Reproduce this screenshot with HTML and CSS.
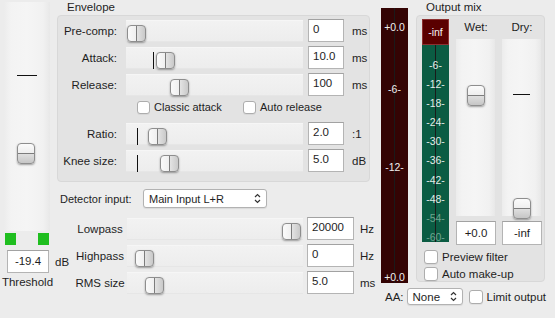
FILE: index.html
```html
<!DOCTYPE html>
<html lang="en">
<head>
  <meta charset="UTF-8" />
  <title>Compressor</title>
  <link rel="stylesheet" href="styles.css">
</head>
<body>

<div class="plugin">

  <!-- Threshold column -->
  <div class="threshold">
    <div class="vtrack thr-track">
      <span class="vmark" style="top: 73px"></span>
      <span class="vthumb" style="top: 141px"></span>
    </div>
    <div class="leds"><span class="led"></span><span class="led"></span></div>
    <div class="thr-field">
      <div class="field center thr-box">-19.4</div>
      <span class="unit">dB</span>
    </div>
    <div class="thr-label">Threshold</div>
  </div>

  <!-- Envelope + detector -->
  <div class="main">
    <div class="group-title">Envelope</div>
    <div class="group envelope">
      <div class="row">
        <span class="row-label">Pre-comp:</span>
        <div class="htrack">
          <span class="hmark" style="left: 12px"></span>
          <span class="hthumb" style="left: 1px"></span>
        </div>
        <div class="field">0</div>
        <span class="unit">ms</span>
      </div>
      <div class="row">
        <span class="row-label">Attack:</span>
        <div class="htrack">
          <span class="hmark" style="left: 27px"></span>
          <span class="hthumb" style="left: 30px"></span>
        </div>
        <div class="field">10.0</div>
        <span class="unit">ms</span>
      </div>
      <div class="row">
        <span class="row-label">Release:</span>
        <div class="htrack">
          <span class="hmark" style="left: 53px"></span>
          <span class="hthumb" style="left: 44px"></span>
        </div>
        <div class="field">100</div>
        <span class="unit">ms</span>
      </div>
      <div class="checks">
        <span class="check first"><span class="box"></span>Classic attack</span>
        <span class="check"><span class="box"></span>Auto release</span>
      </div>
      <div class="row">
        <span class="row-label">Ratio:</span>
        <div class="htrack">
          <span class="hmark" style="left: 11px"></span>
          <span class="hthumb" style="left: 22px"></span>
        </div>
        <div class="field">2.0</div>
        <span class="unit">:1</span>
      </div>
      <div class="row">
        <span class="row-label">Knee size:</span>
        <div class="htrack">
          <span class="hmark" style="left: 11px"></span>
          <span class="hthumb" style="left: 34px"></span>
        </div>
        <div class="field">5.0</div>
        <span class="unit">dB</span>
      </div>
    </div>

    <div class="detector">
      <span class="detector-label">Detector input:</span>
      <div class="select detector-select">
        <span>Main Input L+R</span>
        <svg class="updown" width="7" height="11" viewBox="0 0 7 11"><path d="M1 4 L3.5 1.5 L6 4 M1 7 L3.5 9.5 L6 7" fill="none" stroke="#333" stroke-width="1.2"/></svg>
      </div>
    </div>

    <div class="filters">
      <div class="row frow">
        <span class="frow-label">Lowpass</span>
        <div class="htrack ftrack">
          <span class="hthumb" style="left: 155px"></span>
        </div>
        <div class="field wide">20000</div>
        <span class="unit">Hz</span>
      </div>
      <div class="row frow">
        <span class="frow-label">Highpass</span>
        <div class="htrack ftrack">
          <span class="hthumb" style="left: 8px"></span>
        </div>
        <div class="field wide">0</div>
        <span class="unit">Hz</span>
      </div>
      <div class="row frow">
        <span class="frow-label">RMS size</span>
        <div class="htrack ftrack">
          <span class="hthumb" style="left: 18px"></span>
        </div>
        <div class="field wide">5.0</div>
        <span class="unit">ms</span>
      </div>
    </div>
  </div>

  <!-- Output meter + mix -->
  <div class="right">
    <div class="right-top">
      <div class="out-meter">
        <span class="mlabel m-top">+0.0</span>
        <span class="mlabel m-6">-6-</span>
        <span class="mlabel m-12">-12-</span>
        <span class="mlabel m-bottom">+0.0</span>
      </div>

      <div class="mix">
        <div class="group-title">Output mix</div>
        <div class="group mixbox">
          <div class="mix-top">
            <div class="gr-meter">
              <div class="gr-inf">-inf</div>
              <div class="gr-scale">
                <span>-6-</span>
                <span>-12-</span>
                <span>-18-</span>
                <span>-24-</span>
                <span>-30-</span>
                <span>-36-</span>
                <span>-42-</span>
                <span>-48-</span>
                <span class="dim">-54-</span>
                <span class="dim">-60-</span>
              </div>
            </div>
            <div class="mix-col wet">
              <div class="mix-label">Wet:</div>
              <div class="vtrack mix-track">
                <span class="vthumb" style="top: 46px"></span>
              </div>
              <div class="field center mix-box">+0.0</div>
            </div>
            <div class="mix-col dry">
              <div class="mix-label">Dry:</div>
              <div class="vtrack mix-track">
                <span class="vmark" style="top: 55px"></span>
                <span class="vthumb" style="top: 159px"></span>
              </div>
              <div class="field center mix-box">-inf</div>
            </div>
          </div>
          <div class="check mix-check"><span class="box"></span>Preview filter</div>
          <div class="check mix-check"><span class="box"></span>Auto make-up</div>
        </div>
      </div>
    </div>

    <div class="aa-row">
      <span>AA:</span>
      <div class="select aa-select">
        <span>None</span>
        <svg class="updown" width="7" height="11" viewBox="0 0 7 11"><path d="M1 4 L3.5 1.5 L6 4 M1 7 L3.5 9.5 L6 7" fill="none" stroke="#333" stroke-width="1.2"/></svg>
      </div>
      <span class="check"><span class="box"></span>Limit output</span>
    </div>
  </div>

</div>

</body>
</html>
```

FILE: styles.css
```css
body {
  margin: 0;
  background-color: #ececec;
  font-family: "Liberation Sans", Arial, sans-serif;
  font-size: 11px;
  color: #1e1e1e;
}

.plugin {
  display: flex;
  width: 555px;
  height: 318px;
  overflow: hidden;
}

/* shared bits */

.group-title {
  height: 15px;
  line-height: 15px;
  padding-left: 10px;
  font-size: 11.5px;
}

.group {
  box-sizing: border-box;
  background-color: #e3e3e3;
  border: 1px solid #d8d8d8;
  border-radius: 4px;
}

.field {
  box-sizing: border-box;
  flex: none;
  background: #fff;
  border: 1px solid #b4b4b4;
  border-top-color: #a2a2a2;
  padding: 2px 0 0 4px;
  line-height: 14px;
  font-size: 11.5px;
}

.field.center {
  text-align: center;
  padding-left: 0;
}

.unit {
  flex: none;
  font-size: 11.5px;
}

.check {
  display: inline-flex;
  align-items: center;
  height: 14px;
  white-space: nowrap;
}

.box {
  box-sizing: border-box;
  flex: none;
  width: 13px;
  height: 13px;
  margin-right: 4px;
  background: #fff;
  border: 1px solid #adadad;
  border-radius: 3px;
  box-shadow: 0 1px 0 rgba(0, 0, 0, 0.05);
}

.select {
  box-sizing: border-box;
  flex: none;
  display: flex;
  align-items: center;
  justify-content: space-between;
  background: #fff;
  border: 1px solid #b2b2b2;
  border-radius: 3px;
  padding: 0 5px 0 5px;
  box-shadow: 0 1px 1px rgba(0, 0, 0, 0.08);
}

/* horizontal sliders */

.htrack {
  position: relative;
  box-sizing: border-box;
  flex: none;
  height: 22px;
  background: linear-gradient(#f2f2f2, #ededed);
  border-top: 1px solid #f6f6f6;
  border-bottom: 1px solid #e6e6e6;
}

.hthumb {
  position: absolute;
  top: 4px;
  box-sizing: border-box;
  width: 19px;
  height: 17px;
  border: 1px solid #8e8e8e;
  border-radius: 4px;
  background: linear-gradient(to right, #fafafa, #f0f0f0 45%, #e2e2e2 55%, #c9c9c9);
  box-shadow: 0 1px 2px rgba(0, 0, 0, 0.35);
}

.hthumb::after {
  content: "";
  position: absolute;
  left: 8px;
  top: 0;
  width: 1px;
  height: 100%;
  background: #7c7c7c;
}

.hmark {
  position: absolute;
  top: 4px;
  width: 1px;
  height: 17px;
  background: #111;
}

/* vertical sliders */

.vtrack {
  position: relative;
  box-sizing: border-box;
  flex: none;
  background: linear-gradient(to right, #ececec, #f3f3f3 15%, #f5f5f5 50%, #f1f1f1 85%, #e8e8e8);
}

.vthumb {
  position: absolute;
  left: 13px;
  box-sizing: border-box;
  width: 18px;
  height: 21px;
  border: 1px solid #8e8e8e;
  border-radius: 4px;
  background: linear-gradient(#fbfbfb, #efefef 45%, #dedede 55%, #c6c6c6);
  box-shadow: 0 1px 2px rgba(0, 0, 0, 0.35);
}

.vthumb::after {
  content: "";
  position: absolute;
  top: 9px;
  left: 0;
  width: 100%;
  height: 1px;
  background: #7c7c7c;
}

.vmark {
  position: absolute;
  left: 13px;
  width: 20px;
  height: 1px;
  background: #111;
}

/* threshold */

.threshold {
  width: 57px;
  flex: none;
  padding-top: 2px;
}

.thr-track {
  width: 46px;
  height: 229px;
  margin-left: 4px;
}

.leds {
  display: flex;
  gap: 22px;
  margin: 2px 0 0 5px;
}

.led {
  width: 11px;
  height: 12px;
  background-color: #1fbe1f;
}

.thr-field {
  display: flex;
  align-items: center;
  margin-top: 5px;
}

.thr-box {
  width: 42px;
  height: 23px;
  margin-left: 7px;
  padding-top: 3px;
}

.thr-field .unit {
  margin-left: 6px;
}

.thr-label {
  width: 55px;
  margin-top: 3px;
  text-align: center;
  font-size: 11.5px;
}

/* envelope */

.main {
  width: 313px;
  flex: none;
}

.envelope {
  height: 167px;
  padding-top: 3px;
}

.row {
  display: flex;
  align-items: center;
  height: 23px;
  margin-bottom: 4px;
}

.row-label {
  flex: none;
  width: 59px;
  text-align: right;
  font-size: 11.5px;
}

.row .htrack {
  width: 177px;
  margin-left: 9px;
}

.row .field {
  width: 36px;
  height: 23px;
  margin-left: 5px;
}

.row .unit {
  margin-left: 8px;
}

.checks {
  display: flex;
  height: 14px;
  margin: 0 0 8px 79px;
}

.checks .first {
  width: 106px;
}

/* detector + filters */

.detector {
  display: flex;
  align-items: center;
  height: 19px;
  margin-top: 7px;
}

.detector-label {
  flex: none;
  width: 83px;
  padding-left: 3px;
}

.detector-select {
  width: 124px;
  height: 19px;
}

.filters {
  margin-top: 9px;
}

.frow-label {
  flex: none;
  width: 70px;
  padding-left: 16px;
  box-sizing: border-box;
  text-align: center;
  font-size: 11.5px;
}

.frow .ftrack {
  width: 176px;
  margin-left: 0;
}

.frow .field.wide {
  width: 47px;
  margin-left: 4px;
}

.frow .unit {
  margin-left: 6px;
}

/* output meter */

.right {
  width: 174px;
  margin-left: 11px;
  flex: none;
}

.right-top {
  display: flex;
  align-items: flex-start;
}

.out-meter {
  position: relative;
  flex: none;
  width: 27px;
  height: 275px;
  margin-top: 8px;
  background: #340404;
}

.out-meter::before,
.gr-scale::before {
  content: "";
  position: absolute;
  left: 13px;
  top: 0;
  width: 1px;
  height: 100%;
  background: #1a1a1a;
}

.mlabel {
  position: absolute;
  left: 0;
  width: 100%;
  text-align: center;
  color: #f0f0f0;
  font-size: 10.5px;
  line-height: 12px;
  z-index: 1;
}

.m-top { top: 13px; }
.m-6 { top: 75px; }
.m-12 { top: 153px; }
.m-bottom { top: 263px; }

/* output mix */

.mix {
  flex: none;
  width: 129px;
  margin-left: 8px;
}

.mixbox {
  height: 267px;
  padding: 3px 0 0 5px;
}

.mix-top {
  display: flex;
}

.gr-meter {
  flex: none;
  width: 27px;
  height: 223px;
}

.gr-inf {
  box-sizing: border-box;
  height: 26px;
  padding-top: 6px;
  text-align: center;
  color: #f4f4f4;
  background: #5a0000;
  border: 1px solid #8c3030;
  font-size: 10.5px;
}

.gr-scale {
  position: relative;
  box-sizing: border-box;
  height: 197px;
  padding-top: 14px;
  background: #0b5c43;
}

.gr-scale span {
  position: relative;
  display: block;
  height: 19.1px;
  line-height: 12px;
  text-align: center;
  color: #e2ece8;
  font-size: 10.5px;
  z-index: 1;
}

.gr-scale span.dim {
  color: #6fa48f;
}

.mix-col {
  flex: none;
  width: 40px;
}

.mix-col.wet {
  margin-left: 7px;
}

.mix-col.dry {
  margin-left: 6px;
}

.mix-label {
  height: 16px;
  line-height: 16px;
  margin-bottom: 4px;
  text-align: center;
  font-size: 11.5px;
}

.mix-track {
  width: 39px;
  height: 177px;
}

.mix-track .vthumb {
  left: 11px;
}

.mix-track .vmark {
  left: 11px;
  width: 17px;
}

.mix-box {
  width: 40px;
  height: 24px;
  margin-top: 5px;
  padding-top: 4px;
}

.mix-check {
  display: flex;
  margin: 5px 0 0 2px;
  font-size: 11.5px;
}

.mix-check + .mix-check {
  margin-top: 3px;
}

.mix-check .box {
  width: 14px;
  height: 14px;
}

/* bottom right row */

.aa-row {
  display: flex;
  align-items: center;
  height: 17px;
  margin-top: 5px;
  padding-left: 4px;
  font-size: 11.5px;
}

.aa-select {
  width: 56px;
  height: 17px;
  margin-left: 3px;
}

.aa-row .check {
  margin-left: 6px;
}

.aa-row .box {
  width: 14px;
  height: 14px;
}
```
